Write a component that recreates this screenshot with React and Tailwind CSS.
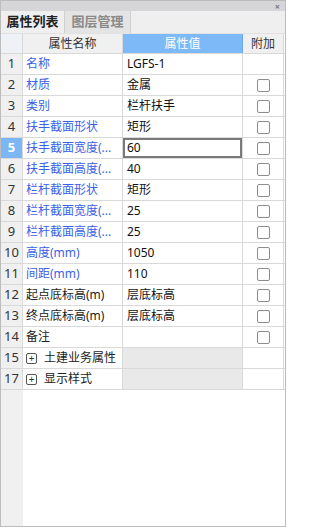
import React from 'react';

const rows = [
  { n: '1', name: '名称', value: 'LGFS-1', blue: true, cb: false },
  { n: '2', name: '材质', value: '金属', blue: true, cb: true },
  { n: '3', name: '类别', value: '栏杆扶手', blue: true, cb: true },
  { n: '4', name: '扶手截面形状', value: '矩形', blue: true, cb: true },
  { n: '5', name: '扶手截面宽度(...', value: '60', blue: true, cb: true, active: true },
  { n: '6', name: '扶手截面高度(...', value: '40', blue: true, cb: true },
  { n: '7', name: '栏杆截面形状', value: '矩形', blue: true, cb: true },
  { n: '8', name: '栏杆截面宽度(...', value: '25', blue: true, cb: true },
  { n: '9', name: '栏杆截面高度(...', value: '25', blue: true, cb: true },
  { n: '10', name: '高度(mm)', value: '1050', blue: true, cb: true },
  { n: '11', name: '间距(mm)', value: '110', blue: true, cb: true },
  { n: '12', name: '起点底标高(m)', value: '层底标高', cb: true },
  { n: '13', name: '终点底标高(m)', value: '层底标高', cb: true },
  { n: '14', name: '备注', value: '', cb: true },
  { n: '15', name: '土建业务属性', group: true },
  { n: '17', name: '显示样式', group: true },
];

function Check() {
  return <div className="w-[13px] h-[13px] border border-[#8c8c8c] rounded-[2px] bg-white"></div>;
}

function Row({ r }) {
  return (
    <div className="flex h-[21px] border-b border-[#d9d9d9]">
      <div
        className={
          r.active
            ? 'w-[22px] shrink-0 border-r border-[#d9d9d9] bg-[#7db6f5] text-white font-bold text-[13px] flex items-center justify-center'
            : 'w-[22px] shrink-0 border-r border-[#d9d9d9] bg-[#f0f0f0] text-[#333] text-[13px] flex items-center justify-center'
        }
      >
        {r.n}
      </div>
      <div
        className={
          r.blue
            ? 'w-[100px] shrink-0 border-r border-[#d9d9d9] pl-[3px] flex items-center text-[#3b5fe8] whitespace-nowrap overflow-hidden'
            : 'w-[100px] shrink-0 border-r border-[#d9d9d9] pl-[3px] flex items-center text-[#222] whitespace-nowrap overflow-hidden'
        }
      >
        {r.group && (
          <span className="w-[11px] h-[11px] border border-[#555] rounded-[2px] mr-[7px] flex items-center justify-center text-[10px] leading-none text-[#333]">
            +
          </span>
        )}
        {r.name}
      </div>
      {r.group ? (
        <div className="w-[120px] shrink-0 border-r border-[#d9d9d9] bg-[#e9e9e9]"></div>
      ) : r.active ? (
        <div className="w-[120px] shrink-0 border-r border-[#d9d9d9] flex items-center">
          <div className="w-[119px] h-[20px] border-2 border-[#7a7a7a] pl-[2px] flex items-center text-[#111]">
            {r.value}
          </div>
        </div>
      ) : (
        <div className="w-[120px] shrink-0 border-r border-[#d9d9d9] pl-[4px] flex items-center text-[#111] whitespace-nowrap">
          {r.value}
        </div>
      )}
      <div className="w-[41px] shrink-0 border-r border-[#d9d9d9] flex items-center justify-center">
        {r.cb && <Check />}
      </div>
    </div>
  );
}

export default function App() {
  return (
    <div
      className="w-[286px] h-[527px] border border-[#bcbcbc] bg-white flex flex-col text-[12px] overflow-hidden"
      style={{ fontFamily: '"Noto Sans", "Noto Sans CJK SC", sans-serif' }}
    >
      {/* title bar */}
      <div className="h-[10px] bg-[#d6d6d9] flex items-center justify-end pr-[5px]">
        <span className="text-[9px] leading-none text-[#777] font-bold">×</span>
      </div>

      {/* tabs */}
      <div className="h-[22px] bg-[#efefef] flex text-[13px]">
        <div className="w-[63px] flex items-center justify-center font-bold text-[#222]">属性列表</div>
        <div className="w-[67px] bg-[#e4e4e4] border-x border-[#d0d0d0] flex items-center justify-center text-[#8a8a8a] font-bold">
          图层管理
        </div>
      </div>

      {/* header */}
      <div className="flex h-[21px] border-b border-[#d9d9d9] border-t border-t-[#e2e2e2]">
        <div className="w-[22px] shrink-0 border-r border-[#d9d9d9] bg-[#eef1f6]"></div>
        <div className="w-[100px] shrink-0 border-r border-[#d9d9d9] bg-[#f0f0f0] flex items-center justify-center text-[#333]">
          属性名称
        </div>
        <div className="w-[120px] shrink-0 border-r border-[#6aa8ee] bg-[#7db9f6] flex items-center justify-center text-white">
          属性值
        </div>
        <div className="w-[41px] shrink-0 border-r border-[#d9d9d9] bg-[#f0f0f0] flex items-center justify-center text-[#333]">
          附加
        </div>
      </div>

      {rows.map((r) => (
        <Row key={r.n} r={r} />
      ))}

      <div className="flex-1 flex">
        <div className="w-[22px] bg-[#f0f0f0]"></div>
      </div>
    </div>
  );
}
